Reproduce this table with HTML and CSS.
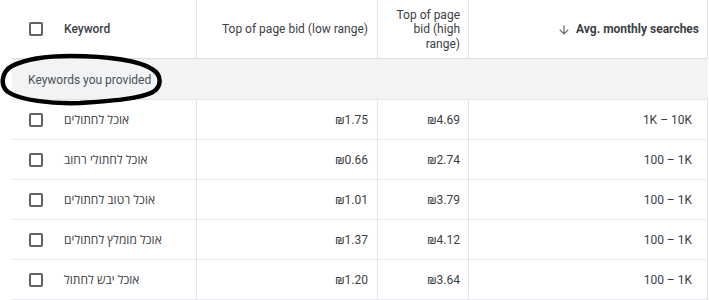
FILE: index.html
```html
<!DOCTYPE html>
<html lang="en">
<head>
<meta charset="utf-8">
<title>Keyword ideas</title>
<link rel="stylesheet" href="styles.css">
</head>
<body>
<div class="table">
  <div class="cell head first">
    <span class="checkbox"></span>
    <span class="head-label strong">Keyword</span>
  </div>
  <div class="cell head num">
    <span class="head-label">Top of page bid (low range)</span>
  </div>
  <div class="cell head num narrow">
    <span class="head-label">Top of page bid (high range)</span>
  </div>
  <div class="cell head num last">
    <svg class="sort-arrow" viewBox="0 0 24 24" width="14" height="14"><path d="M20 12l-1.41-1.41L13 16.17V4h-2v12.17l-5.58-5.59L4 12l8 8 8-8z" fill="#5f6368"/></svg>
    <span class="head-label bold">Avg. monthly searches</span>
  </div>

  <div class="band">
    <span class="band-label">Keywords you provided</span>
    <svg class="scribble" viewBox="0 0 170 58" width="170" height="58">
      <path d="M70 5 C 110 5, 140 10, 152 18 C 162 24, 162 35, 153 41 C 140 48, 110 50, 80 52 C 50 53, 20 49, 8 41 C 0 35, 1 21, 12 15 C 28 7, 50 5, 70 5 Z" fill="none" stroke="#000" stroke-width="4.5" stroke-linejoin="round"/>
    </svg>
  </div>

  <div class="cell first"><span class="checkbox"></span><span class="kw" dir="rtl">אוכל לחתולים</span></div>
  <div class="cell num">₪1.75</div>
  <div class="cell num narrow">₪4.69</div>
  <div class="cell num last val">1K – 10K</div>

  <div class="cell first"><span class="checkbox"></span><span class="kw" dir="rtl">אוכל לחתולי רחוב</span></div>
  <div class="cell num">₪0.66</div>
  <div class="cell num narrow">₪2.74</div>
  <div class="cell num last val">100 – 1K</div>

  <div class="cell first"><span class="checkbox"></span><span class="kw" dir="rtl">אוכל רטוב לחתולים</span></div>
  <div class="cell num">₪1.01</div>
  <div class="cell num narrow">₪3.79</div>
  <div class="cell num last val">100 – 1K</div>

  <div class="cell first"><span class="checkbox"></span><span class="kw" dir="rtl">אוכל מומלץ לחתולים</span></div>
  <div class="cell num">₪1.37</div>
  <div class="cell num narrow">₪4.12</div>
  <div class="cell num last val">100 – 1K</div>

  <div class="cell first"><span class="checkbox"></span><span class="kw" dir="rtl">אוכל יבש לחתול</span></div>
  <div class="cell num">₪1.20</div>
  <div class="cell num narrow">₪3.64</div>
  <div class="cell num last val">100 – 1K</div>
</div>
</body>
</html>
```

FILE: styles.css
```css
* { box-sizing: border-box; }

html, body {
  margin: 0;
  padding: 0;
  background: #fff;
  overflow: hidden;
}

body {
  font-family: Roboto, "Liberation Sans", Arial, sans-serif;
  font-size: 12px;
  color: #3c4043;
}

.table {
  margin-left: 12px;
  width: 696px;
  display: grid;
  grid-template-columns: 185px 181px 91px 239px;
  grid-template-rows: 59px 41px;
  grid-auto-rows: 40px;
}

.cell {
  display: flex;
  align-items: center;
  border-right: 1px solid #e3e3e3;
  border-bottom: 1px solid #e8eaed;
  padding: 0 9px 0 8px;
  white-space: nowrap;
}

.cell.head {
  border-bottom: 1px solid #dadce0;
  font-size: 12px;
  color: #3c4043;
  white-space: normal;
  line-height: 14.5px;
}

.cell.first {
  padding-left: 17px;
  gap: 21px;
}

.cell.num {
  justify-content: flex-end;
  text-align: right;
  padding-top: 1px;
}

.cell.narrow { padding-right: 8px; }

.cell.last { padding-right: 8px; }

.cell.val { padding-right: 15px; }

.checkbox {
  width: 14px;
  height: 14px;
  border: 2px solid #5f6368;
  border-radius: 2px;
  flex: none;
}

.head-label.strong { font-weight: 500; }

.head-label.bold { font-weight: 700; color: #3c4043; }

.sort-arrow {
  margin-right: 5px;
  flex: none;
}

.band {
  grid-column: 1 / -1;
  position: relative;
  background: #f1f3f4;
  border-bottom: 1px solid #e3e3e3;
  display: flex;
  align-items: center;
  padding-left: 16px;
  padding-top: 1px;
}

.band-label {
  color: #4d5156;
  font-size: 12px;
}

.scribble {
  position: absolute;
  left: -12px;
  top: -8px;
  pointer-events: none;
}

.kw {
  display: inline-block;
  font-family: "Open Sans", "Noto Sans", "Liberation Sans", Arial, sans-serif;
  font-size: 12px;
  color: #3c4043;
}
```
